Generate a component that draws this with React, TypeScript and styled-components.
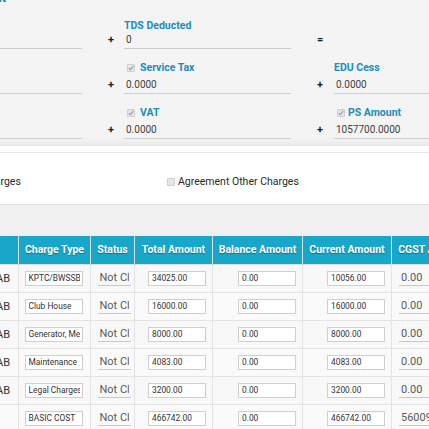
import React from "react";
import styled, { createGlobalStyle } from "styled-components";

const GlobalStyle = createGlobalStyle`
  html, body { margin: 0; padding: 0; background: #f0f0f0; }
  body { font-family: Roboto, "Noto Sans", Arial, sans-serif; }
  * { box-sizing: border-box; }
`;

const Page = styled.div`
  width: 429px;
  height: 429px;
  overflow: hidden;
  background: #f0f0f0;
`;

const TopPanel = styled.section`
  background: #f4f4f4;
  height: 146px;
  overflow: hidden;
  border-bottom: 1px solid #e8e8e8;
  box-shadow: inset 0 -9px 8px -7px rgba(0, 0, 0, 0.06);
`;

const Title = styled.h3`
  margin: -9px 0 0 -40px;
  font-size: 13px;
  line-height: 14px;
  font-weight: 700;
  color: #1c8dbb;
`;

const FieldGrid = styled.div`
  display: grid;
  grid-template-columns: 167px 42px 167px 43px 167px;
  grid-auto-rows: 45px;
  margin: -1px 0 0 -85px;
`;

const Field = styled.div`
  display: flex;
  flex-direction: column;
  justify-content: flex-end;
  min-width: 0;
`;

const Label = styled.div<{ $raised?: boolean }>`
  display: flex;
  align-items: center;
  font-size: 10.5px;
  line-height: 14px;
  font-weight: 700;
  color: #1c8dbb;
  white-space: nowrap;
  margin-bottom: ${(p) => (p.$raised ? 3 : 0)}px;
`;

const Value = styled.div<{ $line?: boolean }>`
  font-size: 10px;
  line-height: 14px;
  color: #3f3f3f;
  padding: 0 0 1.5px 2px;
  border-bottom: 1px solid ${(p) => (p.$line ? "#cdcdcd" : "transparent")};
  white-space: nowrap;
  min-height: 16.5px;
`;

const Op = styled.div`
  display: flex;
  flex-direction: column;
  justify-content: flex-end;
  padding: 0 0 2.5px 26px;
  font-size: 11px;
  line-height: 14px;
  font-weight: 700;
  color: #1e1e1e;
`;

const Box = styled.span<{ $inset?: number }>`
  display: inline-flex;
  align-items: center;
  justify-content: center;
  flex: none;
  width: 8px;
  height: 8px;
  margin: 0 ${(p) => p.$inset ?? 4}px 0 3px;
  background: #e6e6e6;
  border: 1px solid #cfcfcf;
  border-radius: 1px;
`;

const Check = ({ on = true, gap }: { on?: boolean; gap?: number }) => (
  <Box $inset={gap}>
    {on && (
      <svg width="6" height="6" viewBox="0 0 6 6">
        <path d="M0.8 3.1 L2.3 4.6 L5.2 1.2" fill="none" stroke="#9c9c9c" strokeWidth="1.1" />
      </svg>
    )}
  </Box>
);

const OptionsPanel = styled.section`
  background: #fff;
  height: 58px;
  padding-top: 6px;
  overflow: hidden;
`;

const Divider = styled.div`
  height: 1px;
  background: #e6e6e6;
`;

const OptionsRow = styled.div`
  display: grid;
  grid-template-columns: repeat(3, 224px);
  margin: 22px 0 0 -60px;
`;

const Option = styled.label`
  display: flex;
  align-items: center;
  font-size: 10.5px;
  line-height: 14px;
  color: #2a2a2a;
  white-space: nowrap;
`;

const Strip = styled.div`
  height: 32px;
  background: #f0f0f0;
  border-top: 1px solid #e2e2e2;
`;

const Table = styled.table`
  border-collapse: collapse;
  table-layout: fixed;
  width: 501px;
  margin-left: -30px;
  font-family: Roboto, "Noto Sans", Arial, sans-serif;
`;

const Th = styled.th<{ $align?: "left" | "center" }>`
  height: 28px;
  padding: 0 3px;
  background: #18a7c9;
  color: #fff;
  font-size: 10.5px;
  font-weight: 700;
  text-shadow: 0 1px 1px rgba(0, 0, 0, 0.35);
  border: 1px solid #d9dfe2;
  border-top: none;
  white-space: nowrap;
  overflow: hidden;
  text-align: ${(p) => p.$align ?? "center"};
`;

const Tr = styled.tr`
  height: 28px;
  background: #f8f8f8;
  &:nth-child(even) { background: #fafafa; }
`;

const Td = styled.td<{ $align?: "left" | "center" | "right"; $pad?: string }>`
  height: 28px;
  padding: ${(p) => p.$pad ?? "0 6px"};
  border: 1px solid #e3e3e3;
  text-align: ${(p) => p.$align ?? "left"};
  font-size: 11px;
  color: #333;
  white-space: nowrap;
  overflow: hidden;
  vertical-align: middle;
`;

const BoxInput = styled.input`
  display: inline-block;
  vertical-align: middle;
  width: 58px;
  height: 15px;
  padding: 0 2px 0 3px;
  border: 1px solid #cfcfcf;
  background: #fff;
  font-family: Roboto, Arial, sans-serif;
  font-size: 8.4px;
  color: #333;
  outline: none;
`;

const LineInput = styled.input<{ $w: number }>`
  display: inline-block;
  vertical-align: middle;
  width: ${(p) => p.$w}px;
  height: 16px;
  padding: 0 2px;
  border: none;
  border-bottom: 1px solid #c9c9c9;
  background: transparent;
  font-family: Roboto, Arial, sans-serif;
  font-size: 11px;
  color: #5a5a5a;
  outline: none;
`;

type Row = {
  slab: string;
  type: string;
  total: string;
  balance: string;
  current: string;
  cgst: string;
};

const rows: Row[] = [
  { slab: "SLAB", type: "KPTC/BWSSB", total: "34025.00", balance: "0.00", current: "10056.00", cgst: "0.00" },
  { slab: "SLAB", type: "Club House", total: "16000.00", balance: "0.00", current: "16000.00", cgst: "0.00" },
  { slab: "SLAB", type: "Generator, Meter", total: "8000.00", balance: "0.00", current: "8000.00", cgst: "0.00" },
  { slab: "SLAB", type: "Maintenance", total: "4083.00", balance: "0.00", current: "4083.00", cgst: "0.00" },
  { slab: "SLAB", type: "Legal Charges", total: "3200.00", balance: "0.00", current: "3200.00", cgst: "0.00" },
  { slab: "", type: "BASIC COST", total: "466742.00", balance: "0.00", current: "466742.00", cgst: "56009.04" },
];

export default function App() {
  return (
    <Page>
      <GlobalStyle />
      <TopPanel>
        <Title>Amount</Title>
        <FieldGrid>
          <Field>
            <Value $line />
          </Field>
          <Op>+</Op>
          <Field>
            <Label>TDS Deducted</Label>
            <Value $line>0</Value>
          </Field>
          <Op>=</Op>
          <Field />

          <Field>
            <Value $line />
          </Field>
          <Op>+</Op>
          <Field>
            <Label $raised>
              <Check gap={5} />
              Service Tax
            </Label>
            <Value $line>0.0000</Value>
          </Field>
          <Op>+</Op>
          <Field>
            <Label $raised>EDU Cess</Label>
            <Value $line>0.0000</Value>
          </Field>

          <Field>
            <Value $line />
          </Field>
          <Op>+</Op>
          <Field>
            <Label $raised>
              <Check gap={5} />
              VAT
            </Label>
            <Value $line>0.0000</Value>
          </Field>
          <Op>+</Op>
          <Field>
            <Label $raised>
              <Check gap={3} />
              PS Amount
            </Label>
            <Value $line>1057700.0000</Value>
          </Field>
        </FieldGrid>
      </TopPanel>

      <OptionsPanel>
        <Divider />
        <OptionsRow>
          <Option>
            <Check on={false} gap={3} />
            Other Charges
          </Option>
          <Option>
            <Check on={false} gap={3} />
            Agreement Other Charges
          </Option>
        </OptionsRow>
      </OptionsPanel>

      <Strip />

      <Table>
        <colgroup>
          <col style={{ width: 48 }} />
          <col style={{ width: 72 }} />
          <col style={{ width: 44 }} />
          <col style={{ width: 78 }} />
          <col style={{ width: 90 }} />
          <col style={{ width: 89 }} />
          <col style={{ width: 80 }} />
        </colgroup>
        <thead>
          <tr>
            <Th $align="left">Slab</Th>
            <Th>Charge Type</Th>
            <Th>Status</Th>
            <Th>Total Amount</Th>
            <Th>Balance Amount</Th>
            <Th>Current Amount</Th>
            <Th>CGST Amount</Th>
          </tr>
        </thead>
        <tbody>
          {rows.map((r, i) => (
            <Tr key={i}>
              <Td $align="right" $pad="0 8px 0 0">{r.slab}</Td>
              <Td $align="center" $pad="0 2px 0 0">
                <BoxInput readOnly value={r.type} />
              </Td>
              <Td $align="center" $pad="0 0 0 3px">
                <LineInput $w={33} readOnly value="Not Closed" />
              </Td>
              <Td $align="right">
                <BoxInput readOnly value={r.total} />
              </Td>
              <Td $align="right">
                <BoxInput readOnly value={r.balance} />
              </Td>
              <Td $align="right">
                <BoxInput readOnly value={r.current} />
              </Td>
              <Td $pad="0 0 0 7px">
                <LineInput $w={70} readOnly value={r.cgst} />
              </Td>
            </Tr>
          ))}
        </tbody>
      </Table>
    </Page>
  );
}
